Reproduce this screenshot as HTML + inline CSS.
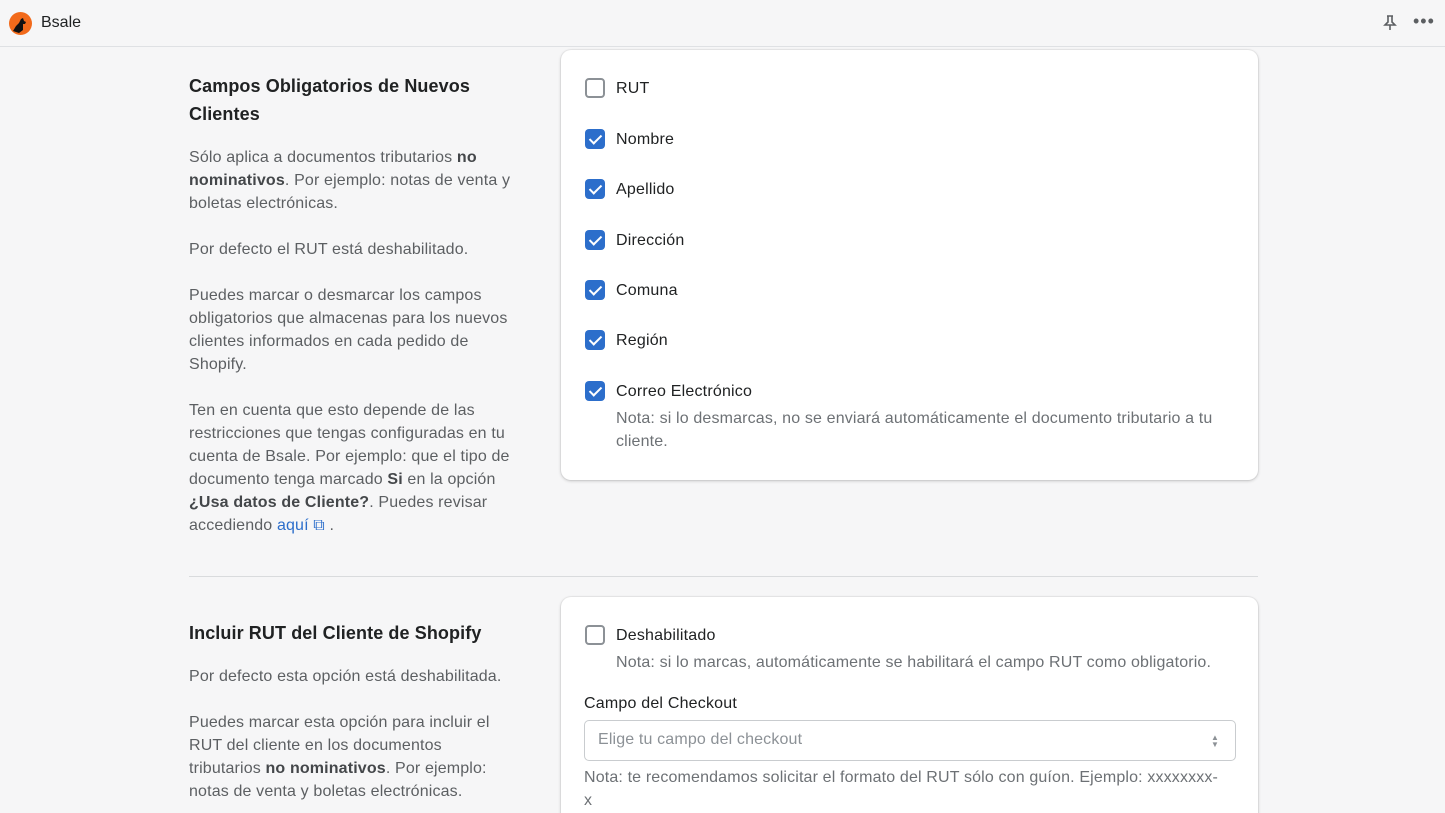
<!DOCTYPE html>
<html><head><meta charset="utf-8"><style>
*{box-sizing:border-box;margin:0;padding:0}
html,body{width:1445px;height:813px;overflow:hidden}
body{background:#f6f6f7;font-family:"Liberation Sans",sans-serif;color:#202223;position:relative}
.top{position:absolute;left:0;top:0;width:1445px;height:47px;background:#f6f6f7;border-bottom:1px solid #dfe1e4}
.abs{position:absolute}
.h{font-size:18px;font-weight:600;line-height:28px;color:#202223;letter-spacing:.1px}
.p{font-size:16px;line-height:23px;color:#5c5f62;width:328px;letter-spacing:.15px}
.p b{color:#44474a}
.card{position:absolute;background:#fff;border-radius:10px;box-shadow:0 1px 3px rgba(0,0,0,.2),0 0 0 1px rgba(0,0,0,.04)}
.cb{position:absolute;width:20px;height:20px;border-radius:4px}
.off{border:2px solid #8c9196;background:#fff}
.on{background:#2c6ecb}
.on::after{content:"";position:absolute;left:7px;top:3px;width:5px;height:10px;border:solid #fff;border-width:0 2px 2px 0;transform:rotate(45deg)}
.lbl{position:absolute;font-size:16px;line-height:22px;color:#202223;letter-spacing:.2px}
.note{position:absolute;font-size:16px;line-height:23px;color:#6d7175;letter-spacing:.15px}
</style></head><body>
<div class="top">
<svg class="abs" style="left:9px;top:12px" width="23" height="23" viewBox="0 0 23 23"><circle cx="11.5" cy="11.5" r="11.5" fill="#f26a1b"/><path d="M4 19 L7 14 L10 11 L12 7 L14 6 L15 9 L17 10 L16 12 L14 12 L14 18 L10 21 Z" fill="#111"/></svg>
<div class="abs" style="left:41px;top:14px;font-size:16px">Bsale</div>
<svg class="abs" style="left:1383px;top:15px" width="14" height="16" viewBox="0 0 14 16" fill="none" stroke="#5c5f62" stroke-width="1.6"><path d="M4 1h6M5 1v6L2 10h10L9 7V1M7 10v5"/></svg>
<div class="abs" style="left:1413px;top:11px;font-size:18px;color:#5c5f62;letter-spacing:1px">•••</div>
</div>

<div class="abs h" style="left:189px;top:72px;width:330px">Campos Obligatorios de Nuevos Clientes</div>
<div class="abs p" style="left:189px;top:146px">Sólo aplica a documentos tributarios <b>no nominativos</b>. Por ejemplo: notas de venta y boletas electrónicas.<br><br>Por defecto el RUT está deshabilitado.<br><br>Puedes marcar o desmarcar los campos obligatorios que almacenas para los nuevos clientes informados en cada pedido de Shopify.<br><br>Ten en cuenta que esto depende de las restricciones que tengas configuradas en tu cuenta de Bsale. Por ejemplo: que el tipo de documento tenga marcado <b>Si</b> en la opción <b>¿Usa datos de Cliente?</b>. Puedes revisar accediendo <span style="color:#2c6ecb">aquí ⧉</span> .</div>

<div class="card" style="left:561px;top:50px;width:697px;height:430px"></div>
<div class="cb off" style="left:585px;top:78px"></div><div class="lbl" style="left:616px;top:78px">RUT</div>
<div class="cb on" style="left:585px;top:129px"></div><div class="lbl" style="left:616px;top:129px">Nombre</div>
<div class="cb on" style="left:585px;top:179px"></div><div class="lbl" style="left:616px;top:179px">Apellido</div>
<div class="cb on" style="left:585px;top:230px"></div><div class="lbl" style="left:616px;top:230px">Dirección</div>
<div class="cb on" style="left:585px;top:280px"></div><div class="lbl" style="left:616px;top:280px">Comuna</div>
<div class="cb on" style="left:585px;top:330px"></div><div class="lbl" style="left:616px;top:330px">Región</div>
<div class="cb on" style="left:585px;top:381px"></div><div class="lbl" style="left:616px;top:381px">Correo Electrónico</div>
<div class="note" style="left:616px;top:407px;width:612px">Nota: si lo desmarcas, no se enviará automáticamente el documento tributario a tu cliente.</div>

<div class="abs" style="left:189px;top:576px;width:1069px;height:1px;background:#d9dbdd"></div>

<div class="abs h" style="left:189px;top:619px">Incluir RUT del Cliente de Shopify</div>
<div class="abs p" style="left:189px;top:665px;width:318px">Por defecto esta opción está deshabilitada.<br><br>Puedes marcar esta opción para incluir el RUT del cliente en los documentos tributarios <b>no nominativos</b>. Por ejemplo: notas de venta y boletas electrónicas.</div>

<div class="card" style="left:561px;top:597px;width:697px;height:260px"></div>
<div class="cb off" style="left:585px;top:625px"></div><div class="lbl" style="left:616px;top:625px">Deshabilitado</div>
<div class="note" style="left:616px;top:651px">Nota: si lo marcas, automáticamente se habilitará el campo RUT como obligatorio.</div>
<div class="lbl" style="left:584px;top:693px">Campo del Checkout</div>
<div class="abs" style="left:584px;top:720px;width:652px;height:41px;border:1px solid #c9cccf;border-radius:5px;background:#fff"></div>
<div class="abs" style="left:598px;top:731px;font-size:16px;color:#8c9196;letter-spacing:.15px">Elige tu campo del checkout</div>
<div class="abs" style="left:1211px;top:734px;font-size:8px;line-height:7px;color:#8c9196">▲<br>▼</div>
<div class="note" style="left:584px;top:766px;width:636px;word-break:break-all">Nota: te recomendamos solicitar el formato del RUT sólo con guíon. Ejemplo: xxxxxxxx-x</div>
</body></html>
